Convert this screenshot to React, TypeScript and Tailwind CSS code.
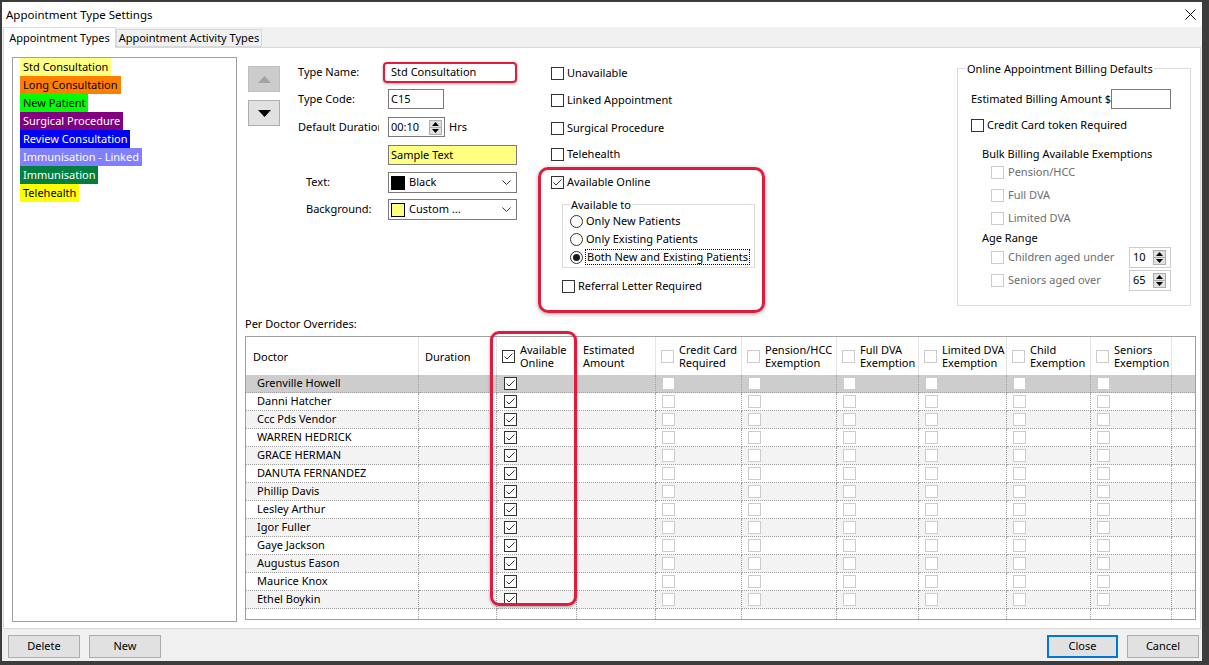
import React from 'react';

function Check({ checked = false, disabled = false }: { checked?: boolean; disabled?: boolean }) {
  return (
    <div
      className={`w-[13px] h-[13px] shrink-0 border bg-white flex items-center justify-center ${
        disabled ? 'border-[#cccccc]' : 'border-[#333333]'
      }`}
    >
      {checked && (
        <svg width="11" height="11" viewBox="0 0 11 11">
          <path d="M1.5 5.5 L4 8 L9.5 2.5" fill="none" stroke="#333333" strokeWidth="1" />
        </svg>
      )}
    </div>
  );
}

function Radio({ on = false }: { on?: boolean }) {
  return (
    <div className="w-[13px] h-[13px] shrink-0 rounded-full border border-[#333333] bg-white flex items-center justify-center">
      {on && <div className="w-[7px] h-[7px] rounded-full bg-[#1a1a1a]" />}
    </div>
  );
}

function SpinBtns() {
  return (
    <div className="w-[13px] h-[15px] shrink-0 flex flex-col border border-[#adadad] bg-[#e1e1e1]">
      <div className="flex-1 flex items-center justify-center border-b border-[#adadad]">
        <svg width="7" height="4" viewBox="0 0 7 4">
          <path d="M0 4 L3.5 0 L7 4Z" fill="#000" />
        </svg>
      </div>
      <div className="flex-1 flex items-center justify-center">
        <svg width="7" height="4" viewBox="0 0 7 4">
          <path d="M0 0 L3.5 4 L7 0Z" fill="#000" />
        </svg>
      </div>
    </div>
  );
}

function Chevron() {
  return (
    <svg width="9" height="5" viewBox="0 0 9 5" className="ml-auto mr-[5px]">
      <path d="M0.5 0.5 L4.5 4.5 L8.5 0.5" fill="none" stroke="#333333" strokeWidth="1" />
    </svg>
  );
}

const types = [
  { t: 'Std Consultation', c: 'bg-[#ffff80] text-black' },
  { t: 'Long Consultation', c: 'bg-[#ff8000] text-black' },
  { t: 'New Patient', c: 'bg-[#00ff00] text-black' },
  { t: 'Surgical Procedure', c: 'bg-[#800080] text-white' },
  { t: 'Review Consultation', c: 'bg-[#0000ff] text-white' },
  { t: 'Immunisation - Linked', c: 'bg-[#8080ff] text-white' },
  { t: 'Immunisation', c: 'bg-[#008040] text-white' },
  { t: 'Telehealth', c: 'bg-[#ffff00] text-black' },
];

const doctors = [
  'Grenville Howell',
  'Danni Hatcher',
  'Ccc Pds Vendor',
  'WARREN HEDRICK',
  'GRACE HERMAN',
  'DANUTA FERNANDEZ',
  'Phillip Davis',
  'Lesley Arthur',
  'Igor Fuller',
  'Gaye Jackson',
  'Augustus Eason',
  'Maurice Knox',
  'Ethel Boykin',
];

const cbCols = [
  { w: 'w-[86px]', l1: 'Credit Card', l2: 'Required' },
  { w: 'w-[95px]', l1: 'Pension/HCC', l2: 'Exemption' },
  { w: 'w-[82px]', l1: 'Full DVA', l2: 'Exemption' },
  { w: 'w-[88px]', l1: 'Limited DVA', l2: 'Exemption' },
  { w: 'w-[84px]', l1: 'Child', l2: 'Exemption' },
  { w: 'w-[81px]', l1: 'Seniors', l2: 'Exemption' },
];

const hdrCell = 'h-full shrink-0 flex items-center border-r border-[#e5e5e5]';
const bodyCell = 'h-full shrink-0 flex items-center border-r border-b border-dotted border-[#a0a0a0]';

function Grid() {
  return (
    <div className="relative mt-[6px] h-[284px] border border-[#a0a0a0] flex flex-col bg-white">
      {/* header */}
      <div className="h-[38px] flex shrink-0 leading-[13px]">
        <div className={`${hdrCell} w-[173px] pl-[7px]`}>Doctor</div>
        <div className={`${hdrCell} w-[78px] pl-[6px]`}>Duration</div>
        <div className={`${hdrCell} w-[80px] pl-[5px] gap-[5px]`}>
          <Check checked />
          <div>
            <div>Available</div>
            <div>Online</div>
          </div>
        </div>
        <div className={`${hdrCell} w-[79px] pl-[6px]`}>
          <div>
            <div>Estimated</div>
            <div>Amount</div>
          </div>
        </div>
        {cbCols.map((c) => (
          <div key={c.l1} className={`${hdrCell} ${c.w} pl-[5px] gap-[5px]`}>
            <Check disabled />
            <div>
              <div>{c.l1}</div>
              <div>{c.l2}</div>
            </div>
          </div>
        ))}
        <div className="flex-1" />
      </div>
      {/* rows */}
      {doctors.map((d, i) => {
        const bg = i === 0 ? 'bg-[#cdcdcd]' : i % 2 === 0 ? 'bg-[#f3f3f3]' : 'bg-white';
        return (
          <div key={d} className={`h-[18px] flex shrink-0 ${bg}`}>
            <div className={`${bodyCell} w-[173px] pl-[11px]`}>{d}</div>
            <div className={`${bodyCell} w-[78px]`} />
            <div className={`${bodyCell} w-[80px] pl-[7px]`}>
              <Check checked />
            </div>
            <div className={`${bodyCell} w-[79px]`} />
            {cbCols.map((c) => (
              <div key={c.l1} className={`${bodyCell} ${c.w} pl-[6px]`}>
                <Check disabled />
              </div>
            ))}
            <div className="h-full flex-1 border-b border-dotted border-[#a0a0a0]" />
          </div>
        );
      })}
      {/* filler */}
      <div className="flex-1 flex">
        <div className="h-full w-[173px] shrink-0 border-r border-dotted border-[#a0a0a0]" />
        <div className="h-full w-[78px] shrink-0 border-r border-dotted border-[#a0a0a0]" />
        <div className="h-full w-[80px] shrink-0 border-r border-dotted border-[#a0a0a0]" />
        <div className="h-full w-[79px] shrink-0 border-r border-dotted border-[#a0a0a0]" />
        {cbCols.map((c) => (
          <div key={c.l1} className={`h-full shrink-0 border-r border-dotted border-[#a0a0a0] ${c.w}`} />
        ))}
      </div>
      {/* highlight annotation */}
      <div className="absolute left-[244px] -top-[6px] w-[87px] h-[275px] rounded-[9px] border-[3px] border-[#e11b3c] shadow-[0_1px_3px_rgba(0,0,0,0.35)] pointer-events-none" />
    </div>
  );
}

export default function App() {
  return (
    <div className="w-[1209px] h-[665px] bg-[#3c3c3c] pt-[2px] pl-[2px] font-['Noto_Sans',sans-serif] text-[11px] text-black">
      <div className="w-[1200px] h-[659px] bg-[#f0f0f0] flex flex-col">
        {/* title bar */}
        <div className="h-[25px] bg-white flex items-center pl-[4px] pr-[6px] shrink-0">
          <span className="text-[11.5px]">Appointment Type Settings</span>
          <svg width="11" height="11" viewBox="0 0 11 11" className="ml-auto">
            <path d="M0.5 0.5 L10.5 10.5 M10.5 0.5 L0.5 10.5" stroke="#111" strokeWidth="1" />
          </svg>
        </div>
        {/* tabs */}
        <div className="h-[20px] flex items-end pl-[1px] shrink-0">
          <div className="relative z-10 -mb-px h-[21px] w-[113px] bg-white border-t border-l border-r border-[#d9d9d9] flex items-center justify-center">
            Appointment Types
          </div>
          <div className="h-[18px] w-[146px] border border-[#d9d9d9] flex items-center justify-center">
            Appointment Activity Types
          </div>
        </div>
        {/* tab page */}
        <div className="ml-[1px] w-[1198px] h-[582px] shrink-0 bg-white border border-[#d9d9d9] flex">
          {/* type list */}
          <div className="ml-[8px] mt-[9px] w-[225px] h-[565px] border border-[#a0a0a0] pl-[7px] flex flex-col items-start">
            {types.map((t) => (
              <div key={t.t} className={`h-[18px] px-[3px] flex items-center ${t.c}`}>
                {t.t}
              </div>
            ))}
          </div>
          {/* right area */}
          <div className="ml-[8px] mt-[9px] w-[951px] flex flex-col">
            <div className="flex h-[258px] shrink-0">
              {/* arrows */}
              <div className="ml-[3px] mt-[9px] w-[32px] flex flex-col gap-[8px]">
                <div className="h-[26px] bg-[#cccccc] border border-[#bfbfbf] flex items-center justify-center">
                  <svg width="13" height="7" viewBox="0 0 13 7">
                    <path d="M0 7 L6.5 0 L13 7Z" fill="#a3a3a3" />
                  </svg>
                </div>
                <div className="h-[26px] bg-[#e1e1e1] border border-[#adadad] flex items-center justify-center">
                  <svg width="13" height="7" viewBox="0 0 13 7">
                    <path d="M0 0 L6.5 7 L13 0Z" fill="#000" />
                  </svg>
                </div>
              </div>
              {/* form */}
              <div className="ml-[18px] w-[219px] flex flex-col">
                <div className="mt-[5px] h-[21px] flex items-center">
                  <div className="w-[85px]">Type Name:</div>
                  <div className="w-[134px] h-[21px] rounded-[4px] border-[2px] border-[#e11b3c] shadow-[0_1px_3px_rgba(0,0,0,0.35)] flex items-center pl-[6px]">
                    Std Consultation
                  </div>
                </div>
                <div className="mt-[6px] h-[20px] flex items-center">
                  <div className="w-[90px]">Type Code:</div>
                  <div className="w-[56px] h-[20px] border border-[#7a7a7a] flex items-center pl-[2px]">C15</div>
                </div>
                <div className="mt-[8px] h-[20px] flex items-center">
                  <div className="w-[81px] mr-[9px] overflow-hidden whitespace-nowrap">Default Duration</div>
                  <div className="w-[57px] h-[20px] border border-[#7a7a7a] flex items-center pl-[2px] pr-[2px]">
                    <span>00:10</span>
                    <div className="ml-auto">
                      <SpinBtns />
                    </div>
                  </div>
                  <span className="ml-[4px]">Hrs</span>
                </div>
                <div className="mt-[8px] h-[20px] flex items-center">
                  <div className="w-[90px]" />
                  <div className="w-[129px] h-[20px] border border-[#7a7a7a] bg-[#ffff80] flex items-center pl-[2px]">
                    Sample Text
                  </div>
                </div>
                <div className="mt-[7px] h-[21px] flex items-center">
                  <div className="w-[90px] pl-[8px]">Text:</div>
                  <div className="w-[129px] h-[21px] border border-[#7a7a7a] flex items-center pl-[2px]">
                    <div className="w-[14px] h-[14px] bg-black border border-black" />
                    <span className="ml-[4px]">Black</span>
                    <Chevron />
                  </div>
                </div>
                <div className="mt-[6px] h-[21px] flex items-center">
                  <div className="w-[90px] pl-[8px]">Background:</div>
                  <div className="w-[129px] h-[21px] border border-[#7a7a7a] flex items-center pl-[2px]">
                    <div className="w-[14px] h-[14px] bg-[#ffff80] border border-black" />
                    <span className="ml-[4px]">Custom ...</span>
                    <Chevron />
                  </div>
                </div>
              </div>
              {/* checkbox column */}
              <div className="ml-[21px] w-[227px] flex flex-col">
                <div className="mt-[8px] pl-[13px] h-[16px] flex items-center gap-[3px]">
                  <Check />
                  Unavailable
                </div>
                <div className="mt-[11px] pl-[13px] h-[16px] flex items-center gap-[3px]">
                  <Check />
                  Linked Appointment
                </div>
                <div className="mt-[12px] pl-[13px] h-[16px] flex items-center gap-[3px]">
                  <Check />
                  Surgical Procedure
                </div>
                <div className="mt-[10px] pl-[13px] h-[16px] flex items-center gap-[3px]">
                  <Check />
                  Telehealth
                </div>
                <div className="mt-[5px] h-[146px] rounded-[10px] border-[3px] border-[#e11b3c] shadow-[0_1px_4px_rgba(0,0,0,0.35)] pt-[4px] flex flex-col">
                  <div className="pl-[10px] h-[16px] flex items-center gap-[3px]">
                    <Check checked />
                    Available Online
                  </div>
                  <div className="relative ml-[21px] mt-[14px] w-[193px] h-[64px] border border-[#dcdcdc] pt-[7px] pl-[7px] flex flex-col">
                    <span className="absolute left-[7px] -top-[7px] bg-white px-[1px] leading-[13px]">Available to</span>
                    <div className="h-[18px] flex items-center gap-[3px]">
                      <Radio />
                      Only New Patients
                    </div>
                    <div className="h-[18px] flex items-center gap-[3px]">
                      <Radio />
                      Only Existing Patients
                    </div>
                    <div className="h-[18px] flex items-center gap-[2px]">
                      <Radio on />
                      <span className="border border-dotted border-black px-[1px] leading-[14px]">
                        Both New and Existing Patients
                      </span>
                    </div>
                  </div>
                  <div className="ml-[21px] mt-[10px] h-[16px] flex items-center gap-[3px]">
                    <Check />
                    Referral Letter Required
                  </div>
                </div>
              </div>
              {/* billing defaults group */}
              <div className="relative ml-[192px] mt-[11px] w-[234px] h-[238px] border border-[#dcdcdc] pl-[13px] flex flex-col">
                <span className="absolute left-[8px] -top-[7px] bg-white px-[1px] leading-[13px]">
                  Online Appointment Billing Defaults
                </span>
                <div className="mt-[20px] h-[20px] flex items-center">
                  <div className="w-[140px] whitespace-nowrap">Estimated Billing Amount $</div>
                  <div className="w-[60px] h-[20px] border border-[#7a7a7a]" />
                </div>
                <div className="mt-[8px] h-[16px] flex items-center gap-[3px]">
                  <Check />
                  Credit Card token Required
                </div>
                <div className="mt-[13px] h-[16px] pl-[11px] flex items-center">Bulk Billing Available Exemptions</div>
                <div className="mt-[2px] h-[16px] pl-[20px] flex items-center gap-[4px] text-[#6d6d6d]">
                  <Check disabled />
                  Pension/HCC
                </div>
                <div className="mt-[7px] h-[16px] pl-[20px] flex items-center gap-[4px] text-[#6d6d6d]">
                  <Check disabled />
                  Full DVA
                </div>
                <div className="mt-[7px] h-[16px] pl-[20px] flex items-center gap-[4px] text-[#6d6d6d]">
                  <Check disabled />
                  Limited DVA
                </div>
                <div className="mt-[4px] h-[16px] pl-[11px] flex items-center">Age Range</div>
                <div className="h-[22px] pl-[20px] pr-[19px] flex items-center gap-[4px] text-[#6d6d6d]">
                  <Check disabled />
                  Children aged under
                  <div className="ml-auto w-[42px] h-[21px] border border-[#cccccc] flex items-center pl-[3px] pr-[4px] text-black">
                    <span>10</span>
                    <div className="ml-auto">
                      <SpinBtns />
                    </div>
                  </div>
                </div>
                <div className="mt-[1px] h-[22px] pl-[20px] pr-[19px] flex items-center gap-[4px] text-[#6d6d6d]">
                  <Check disabled />
                  Seniors aged over
                  <div className="ml-auto w-[42px] h-[21px] border border-[#cccccc] flex items-center pl-[3px] pr-[4px] text-black">
                    <span>65</span>
                    <div className="ml-auto">
                      <SpinBtns />
                    </div>
                  </div>
                </div>
              </div>
            </div>
            <div className="mt-[2px] h-[13px] leading-[13px] shrink-0">Per Doctor Overrides:</div>
            <Grid />
          </div>
        </div>
        {/* bottom buttons */}
        <div className="flex-1 flex items-start pt-[6px] pl-[6px] pr-[3px]">
          <div className="w-[72px] h-[23px] bg-[#e1e1e1] border border-[#adadad] flex items-center justify-center">Delete</div>
          <div className="ml-[9px] w-[72px] h-[23px] bg-[#e1e1e1] border border-[#adadad] flex items-center justify-center">New</div>
          <div className="ml-auto w-[71px] h-[23px] bg-[#e1e1e1] border-[2px] border-[#0078d7] flex items-center justify-center">Close</div>
          <div className="ml-[9px] w-[72px] h-[23px] bg-[#e1e1e1] border border-[#adadad] flex items-center justify-center">Cancel</div>
        </div>
      </div>
    </div>
  );
}
